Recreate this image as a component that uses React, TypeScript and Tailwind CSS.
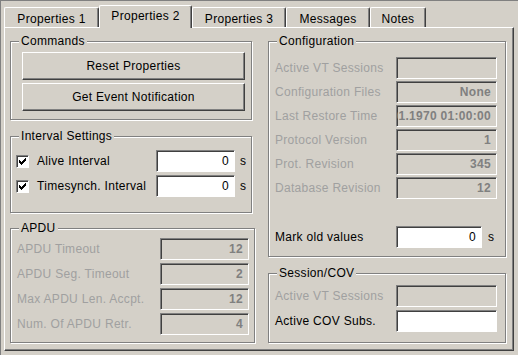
import React from "react";

const font = "font-['Liberation_Sans',Arial,sans-serif]";

const Field = ({
  value = "",
  disabled = false,
  className = "",
}: {
  value?: string;
  disabled?: boolean;
  className?: string;
}) => (
  <div
    className={`flex h-[22px] items-center justify-end overflow-hidden whitespace-nowrap border border-t-[#808080] border-l-[#808080] border-r-white border-b-white pr-[5px] shadow-[inset_1px_1px_0_#404040] ${
      disabled ? "bg-[#d4d0c8] font-bold text-[#808080]" : "bg-white text-black"
    } ${className}`}
  >
    <span className="shrink-0">{value}</span>
  </div>
);

const Group = ({
  title,
  className = "",
  children,
}: {
  title: string;
  className?: string;
  children?: React.ReactNode;
}) => (
  <div className={`relative border border-[#808080] shadow-[inset_1px_1px_0_#fff,1px_1px_0_#fff] ${className}`}>
    <span className="absolute -top-[8px] left-[8px] bg-[#d4d0c8] px-[2px] leading-[14px] text-black">{title}</span>
    {children}
  </div>
);

const Button = ({ label }: { label: string }) => (
  <div className="flex h-[28px] w-[223px] items-center justify-center border border-t-white border-l-white border-r-[#404040] border-b-[#404040] shadow-[inset_-1px_-1px_0_#808080]">
    {label}
  </div>
);

const Check = () => (
  <div className="h-[13px] w-[13px] shrink-0 border border-t-[#808080] border-l-[#808080] border-r-white border-b-white bg-white shadow-[inset_1px_1px_0_#404040]">
    <svg width="11" height="11" viewBox="0 0 11 11" shapeRendering="crispEdges" className="block">
      <rect x="2" y="4" width="1" height="3" fill="#000" />
      <rect x="3" y="5" width="1" height="3" fill="#000" />
      <rect x="4" y="6" width="1" height="3" fill="#000" />
      <rect x="5" y="5" width="1" height="3" fill="#000" />
      <rect x="6" y="4" width="1" height="3" fill="#000" />
      <rect x="7" y="3" width="1" height="3" fill="#000" />
      <rect x="8" y="2" width="1" height="3" fill="#000" />
    </svg>
  </div>
);

const tabs: [string, number][] = [
  ["Properties 1", 95],
  ["Properties 2", 93],
  ["Properties 3", 94],
  ["Messages", 84],
  ["Notes", 56],
];

const apdu = [
  ["APDU Timeout", "12"],
  ["APDU Seg. Timeout", "2"],
  ["Max APDU Len. Accpt.", "12"],
  ["Num. Of APDU Retr.", "4"],
];

const config = [
  ["Active VT Sessions", ""],
  ["Configuration Files", "None"],
  ["Last Restore Time", "01.01.1970 01:00:00"],
  ["Protocol Version", "1"],
  ["Prot. Revision", "345"],
  ["Database Revision", "12"],
];

export default function App() {
  return (
    <div
      className={`h-[355px] w-[518px] overflow-hidden border-l border-t border-[#808080] bg-[#d4d0c8] text-[12px] tracking-[0.3px] text-black ${font}`}
    >
      {/* tab strip */}
      <div className="flex h-[26px] items-end pl-[3px]">
        {tabs.map(([name, w], i) =>
          i === 1 ? (
            <div
              key={name}
              style={{ width: w }}
              className="relative z-10 -mb-[1px] flex h-[23px] items-center justify-center rounded-t-[2px] border-l border-t border-r border-l-white border-t-white border-r-[#404040] bg-[#d4d0c8] pb-[2px] shadow-[inset_-1px_0_0_#808080]"
            >
              {name}
            </div>
          ) : (
            <div
              key={name}
              style={{ width: w }}
              className="flex h-[20px] items-center justify-center rounded-t-[2px] border-l border-t border-r border-l-white border-t-white border-r-[#404040] pt-[2px] shadow-[inset_-1px_0_0_#808080]"
            >
              {name}
            </div>
          )
        )}
      </div>

      {/* tab page */}
      <div className="ml-[3px] flex h-[324px] w-[510px] border border-t-white border-l-white border-r-[#404040] border-b-[#404040] pl-[5px] pt-[13px] shadow-[inset_-1px_-1px_0_#808080]">
        <div className="flex w-[245px] flex-col items-start">
          <Group title="Commands" className="flex h-[79px] w-[242px] flex-col gap-[3px] pl-[11px] pt-[10px]">
            <Button label="Reset Properties" />
            <Button label="Get Event Notification" />
          </Group>

          <Group title="Interval Settings" className="mt-[16px] flex h-[77px] w-[242px] flex-col gap-[3px] pl-[5px] pt-[13px]">
            {["Alive Interval", "Timesynch. Interval"].map((l) => (
              <div key={l} className="flex h-[22px] items-center">
                <Check />
                <span className="ml-[8px] w-[119px]">{l}</span>
                <Field value="0" className="w-[79px]" />
                <span className="ml-[5px]">s</span>
              </div>
            ))}
          </Group>

          <Group title="APDU" className="mt-[15px] flex h-[115px] w-[245px] flex-col gap-[3px] pl-[6px] pt-[9px]">
            {apdu.map(([l, v]) => (
              <div key={l} className="flex h-[22px] items-center">
                <span className="w-[143px] text-[#a0a0a0]">{l}</span>
                <Field value={v} disabled className="w-[89px]" />
              </div>
            ))}
          </Group>
        </div>

        <div className="ml-[13px] flex w-[238px] flex-col">
          <Group title="Configuration" className="flex h-[216px] w-[238px] flex-col pl-[6px] pt-[15px]">
            <div className="flex flex-col gap-[2px]">
              {config.map(([l, v]) => (
                <div key={l} className="flex h-[22px] items-center">
                  <span className="w-[121px] text-[#a0a0a0]">{l}</span>
                  <Field value={v} disabled className="w-[101px]" />
                </div>
              ))}
            </div>
            <div className="mt-[27px] flex h-[22px] items-center">
              <span className="w-[121px]">Mark old values</span>
              <Field value="0" className="w-[86px]" />
              <span className="ml-[6px]">s</span>
            </div>
          </Group>

          <Group title="Session/COV" className="mt-[16px] flex h-[70px] w-[238px] flex-col gap-[3px] pl-[6px] pt-[11px]">
            <div className="flex h-[22px] items-center">
              <span className="w-[121px] text-[#a0a0a0]">Active VT Sessions</span>
              <Field disabled className="w-[101px]" />
            </div>
            <div className="flex h-[22px] items-center">
              <span className="w-[121px]">Active COV Subs.</span>
              <Field className="w-[101px]" />
            </div>
          </Group>
        </div>
      </div>
    </div>
  );
}
